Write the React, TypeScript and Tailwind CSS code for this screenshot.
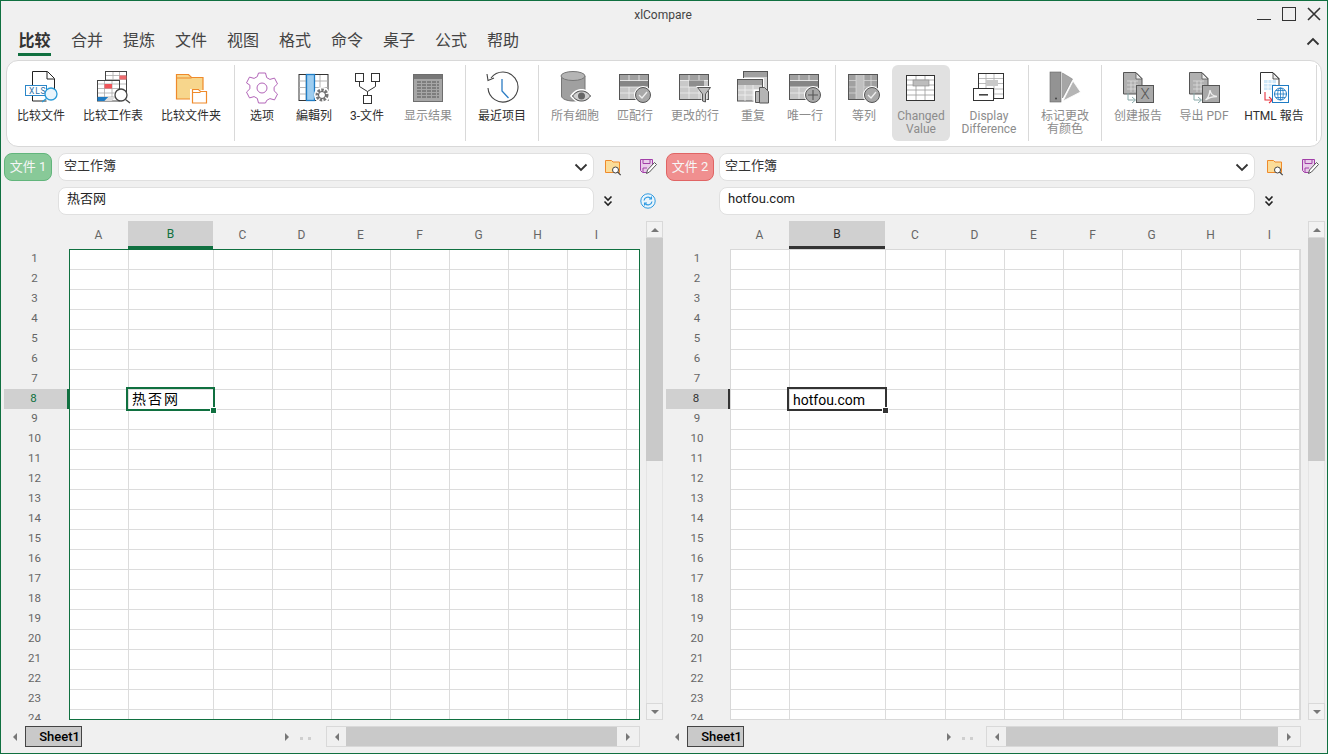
import React from "react";

const FONT = "font-['Roboto','Noto_Sans_CJK_SC',sans-serif]";
const G = "#a0a0a0";
const D = "#555555";

const Svg = ({ children }: { children: React.ReactNode }) => (
  <svg width="36" height="36" viewBox="0 0 36 36" fill="none" className="shrink-0">{children}</svg>
);

const Badge = ({ kind }: { kind: "check" | "plus" }) => (
  <g>
    <circle cx="26" cy="25" r="9" fill="#fff" />
    <circle cx="26" cy="25" r="7.5" fill="#a8a8a8" stroke={D} strokeWidth="1" />
    {kind === "check" ? (
      <path d="M22 25l3 3 5-6" stroke="#eee" strokeWidth="1.3" />
    ) : (
      <path d="M21 25h10M26 20v10" stroke={D} strokeWidth="1.1" />
    )}
  </g>
);

const GrayTable = () => (
  <g>
    <rect x="2.5" y="4.5" width="29" height="25" fill="#c6c6c6" stroke={D} />
    <rect x="3" y="5" width="28" height="5.500" fill={G} />
    <rect x="3" y="11" width="28" height="6" fill="#858585" />
    <path d="M3 10.500h28M3 17h28M3 23h28M12 5v6M22 5v6M12 17v12M22 17v12" stroke="#eee" strokeWidth="0.8" />
  </g>
);

const SourceDoc = ({ arrow }: { arrow: string }) => (
  <g transform="translate(-3 0)">
    <path d="M6.500 2.500H19l6 6V24H6.500z" fill="#b0b0b0" stroke={D} />
    <path d="M19 3v6h6z" fill="#eee" stroke={D} strokeWidth="0.8" />
    <path d="M10 11h11M10 15h11M10 19h11M14 11v11M18 11v11" stroke="#ddd" strokeWidth="0.8" />
    <path d="M11 23v7h7M15 27l3.500 3-3.500 3" stroke={arrow} strokeWidth="1" />
  </g>
);

const icons: Record<string, React.ReactNode> = {
  file: (
    <Svg>
      <path d="M9.500 15V1.500h15l7 7v15M9.500 26v5h14" stroke="#222" strokeWidth="1" />
      <path d="M24 2v7h7" stroke="#222" strokeWidth="1" />
      <rect x="2.500" y="15.500" width="21" height="10" fill="#fff" stroke="#2a86c8" />
      <text x="6" y="24" fontSize="8.500" fontFamily="Roboto" fill="#2a6fa8" letterSpacing="0.8">XLS</text>
      <circle cx="28" cy="24" r="6" fill="#eaf5fc" stroke="#2a9bd8" strokeWidth="1.300" />
      <path d="M23.500 28.500L19 32" stroke="#2a9bd8" strokeWidth="1.300" />
    </Svg>
  ),
  sheet: (
    <Svg>
      <rect x="10.500" y="1.500" width="21" height="21" fill="#fff" stroke="#444" />
      <path d="M11 5.500h20M11 9.500h20M11 14h20M18 2v20M24.500 2v20" stroke="#aaa" strokeWidth="0.8" />
      <rect x="24.500" y="5.500" width="7" height="4" fill="#ee6a6e" />
      <rect x="2.500" y="10.500" width="22" height="20.500" fill="#fff" stroke="#444" />
      <path d="M3 14h21M3 18.500h21M3 23h21M3 27h21M9.500 11v20M17 11v20" stroke="#aaa" strokeWidth="0.8" />
      <rect x="9.500" y="14" width="7.500" height="4.500" fill="#f0555a" />
      <path d="M2.500 31v-4h11l-4 4z" fill="#1f7cc4" />
      <path d="M9.500 31l4-4h7l-4 4z" fill="#ddd" />
      <circle cx="26" cy="25" r="6" fill="#fff" stroke="#444" strokeWidth="1.300" />
      <path d="M30.500 29.500l4.500 3.500" stroke="#444" strokeWidth="1.300" />
    </Svg>
  ),
  folder: (
    <Svg>
      <path d="M3.500 4.500h12l3 3h11.500v21.500H3.500z" fill="#f7d68c" stroke="#ef8a2b" strokeWidth="1.200" />
      <path d="M3.500 8h15" stroke="#ef8a2b" />
      <path d="M18 19h-1v14.500h17.500V20h-7l-2-1z" fill="#fff" />
      <path d="M19.500 19.500h6l2 2h6v11.500H19.500z" fill="#fff" stroke="#ef8a2b" strokeWidth="1.200" />
      <path d="M19.500 22.500h8" stroke="#ef8a2b" />
    </Svg>
  ),
  gear: (
    <Svg>
      <path
        d="M14.500 3h7l1.200 4.600 3.200 1.800 4.600-1.300 3 5.800-3.400 3.300v3.600l3.400 3.300-3 5.800-4.600-1.300-3.200 1.800L21.500 33h-7l-1.200-4.600-3.200-1.800-4.600 1.300-3-5.800 3.400-3.300v-3.600L2.500 12.900l3-5.800 4.600 1.300 3.200-1.800z"
        stroke="#b264b8"
        strokeWidth="1"
        fill="#fff"
      />
      <circle cx="18" cy="18" r="5" stroke="#b264b8" strokeWidth="1" />
    </Svg>
  ),
  editcol: (
    <Svg>
      <rect x="3" y="4.500" width="29" height="26" fill="#fff" stroke="#333" />
      <path d="M3 11h29M3 17.500h29M3 24h29M10 5v25M24 5v20" stroke="#aaa" strokeWidth="0.9" />
      <rect x="10.500" y="4.500" width="8" height="26" fill="#9dcdf0" stroke="#1f7cc4" strokeWidth="1.300" />
      <circle cx="26" cy="25" r="8" fill="#fff" />
      <circle cx="26" cy="25" r="5" fill="none" stroke="#777" strokeWidth="3" strokeDasharray="2.500 1.200" />
      <circle cx="26" cy="25" r="3.500" fill="#fff" stroke="#555" strokeWidth="1" />
    </Svg>
  ),
  three: (
    <Svg>
      <rect x="6.500" y="3.500" width="8" height="8" stroke="#333" />
      <rect x="22.500" y="3.500" width="8" height="8" stroke="#333" />
      <rect x="14.500" y="25.500" width="8" height="8" stroke="#333" />
      <path d="M10.500 11.500v5l8 5 8-5v-5M18.500 21.500v4" stroke="#333" />
    </Svg>
  ),
  result: (
    <Svg>
      <rect x="3.500" y="4.500" width="29" height="27" fill="#a6a6a6" stroke="#6e6e6e" />
      <rect x="4" y="5" width="28" height="4" fill="#777" />
      <path d="M7 12h22M7 15h22M7 18h22M7 21h22M7 24h22M7 27h22" stroke="#555" strokeWidth="1" strokeDasharray="4 1" />
    </Svg>
  ),
  recent: (
    <Svg>
      <path d="M7 8A15 15 0 1 1 4 18" stroke="#444" strokeWidth="1.100" />
      <path d="M3 4l1 6.500L10 8" stroke="#444" strokeWidth="1.100" />
      <path d="M18 9v12l6.500 7" stroke="#2b7cc4" strokeWidth="1.300" />
    </Svg>
  ),
  cells: (
    <Svg>
      <path d="M4.500 6v20c0 3 6 5 11.500 5s12-2 12-5V6z" fill={G} stroke="#777" />
      <ellipse cx="16" cy="6" rx="12" ry="4.500" fill="#b5b5b5" stroke="#777" />
      <path d="M13 26c4-6 8-7 11.500-7S32 20 36 26c-4 5-8 7-11.500 7S17 31 13 26z" fill="#fff" />
      <path d="M15.500 26c3-4 6-5 9-5s6 1 9 5c-3 4-6 5-9 5s-6-1-9-5z" fill="#cfcfcf" stroke="#444" />
      <circle cx="24.500" cy="26" r="3.500" fill="#666" />
    </Svg>
  ),
  match: (
    <Svg>
      <GrayTable />
      <Badge kind="check" />
    </Svg>
  ),
  changedRows: (
    <Svg>
      <rect x="2.500" y="4.500" width="29" height="25" fill="#c9c9c9" stroke={D} />
      <rect x="3" y="5" width="28" height="5" fill={G} />
      <path d="M3 10.500h28M3 17h28M3 23h28M12 5v24M22 5v24" stroke="#eee" strokeWidth="0.8" />
      <rect x="12" y="10.500" width="15" height="6" fill="#8d8d8d" />
      <path d="M19 16h16l-5.500 7.500V34l-5-1.500v-9z" fill="#fff" />
      <path d="M20.500 17.500h13l-5 6.500v8l-3-1v-7z" fill="#bdbdbd" stroke={D} strokeWidth="1" />
    </Svg>
  ),
  dup: (
    <Svg>
      <rect x="8.500" y="1.500" width="24" height="22" fill="#d6d6d6" stroke={D} />
      <rect x="9" y="2" width="23" height="5" fill={G} />
      <rect x="1" y="8" width="28" height="25" fill="#fff" />
      <rect x="2.500" y="9.500" width="25" height="21.500" fill="#d0d0d0" stroke={D} />
      <rect x="3" y="10" width="24" height="5" fill={G} />
      <path d="M3 20h24M3 25h24M10 15v16M18 15v16" stroke="#f2f2f2" strokeWidth="0.8" />
      <path d="M18.500 19.500h8l3 0 5 5V34h-16z" fill="#fff" />
      <path d="M20.500 21.500h6v11h-6z" fill="#b5b5b5" stroke={D} />
      <path d="M24.500 17.500h5l4 4v11.500h-9z" fill="#b5b5b5" stroke={D} />
    </Svg>
  ),
  unique: (
    <Svg>
      <GrayTable />
      <Badge kind="plus" />
    </Svg>
  ),
  equal: (
    <Svg>
      <rect x="2.500" y="4.500" width="29" height="25" fill="#a0a0a0" stroke={D} />
      <rect x="10" y="5" width="8" height="24" fill="#c0c0c0" />
      <path d="M3 10.500h7M3 17h7M3 23h7M18 10.500h13M18 17h13M18 23h13M10 5v24M18 5v24M25 5v24" stroke="#ddd" strokeWidth="0.7" />
      <Badge kind="check" />
    </Svg>
  ),
  changed: (
    <Svg>
      <rect x="3.500" y="5.500" width="28" height="25" fill="#fff" stroke="#333" />
      <path d="M4 10h27M4 15h27M4 20h27M4 25h27M13 6v24M22 6v24" stroke="#999" strokeWidth="0.8" />
      <rect x="10" y="10" width="16" height="6" fill="#bdbdbd" stroke="#888" strokeWidth="0.6" />
    </Svg>
  ),
  display: (
    <Svg>
      <rect x="7.500" y="3.500" width="25" height="25" fill="#fff" stroke="#333" />
      <path d="M8 8.500h24M8 13.500h24M8 19h24M8 24h24M15 4v24M23 4v24" stroke="#aaa" strokeWidth="0.8" />
      <rect x="15" y="10" width="12" height="6" fill="#c9c9c9" />
      <rect x="2.500" y="18.500" width="20" height="12" fill="#fff" stroke="#333" />
      <rect x="8" y="24" width="9" height="1.600" fill="#444" />
    </Svg>
  ),
  colors: (
    <Svg>
      <rect x="3" y="2" width="11" height="30" fill="#939393" stroke="#666" strokeWidth="0.6" />
      <circle cx="9" cy="28.500" r="1" fill="#444" />
      <path d="M15.500 28V3l10 6z" fill="#a6a6a6" stroke="#777" strokeWidth="0.5" />
      <path d="M16 31l10-20 7.500 11z" fill="#b5b5b5" stroke="#fff" strokeWidth="0.8" />
    </Svg>
  ),
  report: (
    <Svg>
      <SourceDoc arrow="#8aa" />
      <rect x="16.500" y="15.500" width="17" height="17" fill="#a9a9a9" stroke={D} />
      <text x="25" y="29" fontSize="15" fontFamily="Roboto" fontWeight="300" fill="#555" textAnchor="middle">X</text>
    </Svg>
  ),
  pdf: (
    <Svg>
      <SourceDoc arrow="#8aa" />
      <rect x="16.500" y="15.500" width="17" height="17" fill="#a9a9a9" stroke={D} />
      <path d="M19.500 30c3-2 4-6 4.500-10 .5 4 2.500 6 7 6.500-4 0-8 1-11.500 3.500z" stroke="#eee" strokeWidth="1.300" />
    </Svg>
  ),
  html: (
    <Svg>
      <g transform="translate(-2 0)">
        <path d="M6.500 24V2.500H19l6 6V17" stroke="#333" fill="none" />
        <path d="M19 3v6h6z" fill="#eee" stroke="#333" strokeWidth="0.8" />
        <rect x="10" y="10" width="12" height="10" fill="#cde6f7" />
        <path d="M10 13.500h12M10 17h12M14 10v10M18 10v10" stroke="#fff" strokeWidth="0.8" />
        <path d="M11 22v8h7M15 27l3.500 3-3.500 3" stroke="#e8323c" strokeWidth="1.100" />
        <rect x="18.500" y="15.500" width="16" height="17" fill="#fff" stroke="#1f7cc4" />
        <circle cx="26.500" cy="24" r="6" stroke="#1f7cc4" />
        <path d="M20.500 24h12M26.500 18v12M22 20.500h9M22 27.500h9" stroke="#1f7cc4" strokeWidth="0.8" />
        <ellipse cx="26.500" cy="24" rx="2.800" ry="6" stroke="#1f7cc4" strokeWidth="0.8" />
      </g>
    </Svg>
  ),
};

type Item = { k: string; label: string[]; w: string; off?: boolean; active?: boolean };

const Tool = ({ k, label, w, off, active }: Item) => (
  <div className={`${w} mt-[4px] h-[76px] pt-[5px] flex flex-col items-center shrink-0 rounded-md ${active ? "bg-[#e1e1e1]" : ""}`}>
    {icons[k]}
    <div className={`mt-[4px] text-[12px] leading-[13px] text-center whitespace-nowrap ${off ? "text-[#8c8c8c]" : "text-[#2e2e2e]"}`}>
      {label.map((l) => (
        <div key={l}>{l}</div>
      ))}
    </div>
  </div>
);

const Sep = ({ m = "" }: { m?: string }) => <div className={`w-px h-[76px] mt-[4px] bg-[#d9d9d9] shrink-0 ${m}`} />;

const FolderSearch = () => (
  <svg width="18" height="18" viewBox="0 0 18 18" fill="none">
    <path d="M1.500 2.500h6l1.500 1.500h6.500v10.500H1.500z" fill="#fbdc98" stroke="#ef8a2b" />
    <circle cx="11.500" cy="12" r="3" fill="#fff" stroke="#444" />
    <path d="M13.700 14.200l3 3" stroke="#444" strokeWidth="1.200" />
  </svg>
);

const SaveEdit = () => (
  <svg width="18" height="18" viewBox="0 0 18 18" fill="none">
    <path d="M1.500 1.500h12v6l-5 7h-5l-2-2z" fill="#e9cdea" stroke="#a23fa8" />
    <path d="M4 1.500v4h7v-4M4 14v-4h4" stroke="#a23fa8" />
    <path d="M7.500 15.500l1-3.500 7-7.500 2 2-7 7.500z" fill="#fff" stroke="#555" />
  </svg>
);

const DoubleChevron = () => (
  <svg width="12" height="12" viewBox="0 0 12 12" fill="none" stroke="#222" strokeWidth="1.600">
    <path d="M2.500 1.500L6 5l3.500-3.500M2.500 6.500L6 10l3.500-3.500" />
  </svg>
);

const Chevron = () => (
  <svg width="14" height="9" viewBox="0 0 14 9" fill="none" stroke="#333" strokeWidth="1.800">
    <path d="M1.500 1.500L7 7l5.500-5.500" />
  </svg>
);

const Refresh = () => (
  <svg width="16" height="16" viewBox="0 0 16 16" fill="none" stroke="#2f9ae0" strokeWidth="1">
    <circle cx="8" cy="8" r="7.200" fill="#eaf5fc" />
    <path d="M4 7.500a4 4 0 0 1 7-2M12 8.500a4 4 0 0 1-7 2" strokeWidth="1.200" />
    <path d="M11.500 3.500v2.500H9M4.500 12.500V10H7" strokeWidth="1.100" />
  </svg>
);

const ROWS = Array.from({ length: 24 }, (_, i) => i + 1);
const COLS = ["A", "B", "C", "D", "E", "F", "G", "H", "I"];

type Tri = "l" | "r" | "u" | "d";
const Arrow = ({ d }: { d: Tri }) => {
  const p = { l: "M7 1v8L3 5z", r: "M3 1v8l4-4z", u: "M1 7h8L5 3z", d: "M1 3h8L5 7z" }[d];
  return (
    <svg width="10" height="10" viewBox="0 0 10 10">
      <path d={p} fill="#777" />
    </svg>
  );
};

type PaneProps = {
  side: "left" | "right";
  badge: string;
  value: string;
};

const Pane = ({ side, badge, value }: PaneProps) => {
  const left = side === "left";
  const cols = left
    ? "grid-cols-[59px_85px_59px_59px_59px_59px_59px_59px_59px_12px]"
    : "grid-cols-[59px_96px_60px_59px_59px_59px_59px_59px_59px]";
  const cells = left ? [...COLS, ""] : COLS;
  return (
    <div className={`flex flex-col shrink-0 ${left ? "w-[661px] pl-[3px]" : "w-[664px] pl-[4px]"}`}>
      <div className="flex h-[28px] items-center">
        <div
          className={`w-[48px] h-[28px] rounded-lg border text-[13px] text-[#f6f6f6] flex items-center justify-center shrink-0 ${
            left ? "bg-[#88c998] border-[#62b57c]" : "bg-[#f08f8f] border-[#e06464]"
          }`}
        >
          {badge}
        </div>
        <div className={`h-[28px] w-[536px] rounded-lg border border-[#e0e0e0] bg-white flex items-center justify-between pl-[5px] pr-[5px] text-[13px] text-[#333] shrink-0 ${left ? "ml-[6px]" : "ml-[5px]"}`}>
          <span className="pb-[2px]">空工作簿</span>
          <Chevron />
        </div>
        <div className={`h-full flex items-center justify-center shrink-0 ${left ? "w-[38px]" : "w-[40px]"}`}>
          <FolderSearch />
        </div>
        <div className={`h-full flex items-center justify-center shrink-0 ${left ? "w-[32px]" : "w-[30px]"}`}>
          <SaveEdit />
        </div>
      </div>

      <div className={`flex h-[28px] mt-[6px] items-center ${left ? "pl-[54px]" : "pl-[53px]"}`}>
        <div className="h-[28px] w-[536px] rounded-lg border border-[#e0e0e0] bg-white flex items-center text-[13px] text-[#222] shrink-0 pb-[5px] pl-[8px]">
          {value}
        </div>
        <div className="w-[28px] h-full flex items-center justify-center shrink-0">
          <DoubleChevron />
        </div>
        {left && (
          <div className="w-[52px] h-full flex items-center justify-center shrink-0">
            <Refresh />
          </div>
        )}
      </div>

      <div className="flex mt-[6px] h-[499px]">
        <div className="w-[642px] shrink-0 flex flex-col overflow-hidden">
          <div className={`flex h-[28px] shrink-0 ${left ? "pl-[65px]" : "pl-[64px]"}`}>
            <div className={`grid ${cols} h-[28px]`}>
              {cells.map((c) => (
                <div
                  key={c || "x"}
                  className={`flex items-center justify-center text-[12px] ${
                    c === "B"
                      ? `bg-[#d0d0d0] border-b-[3px] ${left ? "border-[#107040] text-[#107040]" : "border-[#333] text-[#333]"}`
                      : "text-[#666]"
                  }`}
                >
                  {c}
                </div>
              ))}
            </div>
          </div>
          <div className="flex h-[471px]">
            <div className={`shrink-0 flex flex-col h-[471px] overflow-hidden ${left ? "w-[65px]" : "w-[64px]"}`}>
              {ROWS.map((r) => (
                <div
                  key={r}
                  className={`h-[20px] shrink-0 flex items-center justify-center text-[11.500px] ${left ? "pl-[19px] pr-[23px]" : "pl-[20px] pr-[22px]"} ${
                    r === 8
                      ? `bg-[#d0d0d0] border-r-[2px] ${left ? "border-[#107040] text-[#107040]" : "border-[#333] text-[#333]"}`
                      : "text-[#666]"
                  }`}
                >
                  {r}
                </div>
              ))}
            </div>
            <div className={`relative w-[571px] h-[471px] bg-white border shrink-0 overflow-hidden ${left ? "border-[#107040]" : "border-[#d8d8d8]"}`}>
              <div className={`grid ${cols}`}>
                {ROWS.map((r) =>
                  cells.map((c) => (
                    <div
                      key={`${r}${c}`}
                      className={`h-[20px] border-b border-[#dcdcdc] ${c ? "border-r" : ""}`}
                    />
                  ))
                )}
              </div>
              <div
                className={`absolute left-[56px] top-[137px] h-[24px] border-2 flex items-center text-[14px] text-black leading-none ${
                  left ? "w-[89px] border-[#107040] pl-[4px] tracking-[2px] pb-[1px]" : "w-[100px] border-[#333] pl-[4px] pt-[2px]"
                }`}
              >
                {value}
              </div>
              <div
                className={`absolute top-[157px] w-[7px] h-[7px] border border-white ${
                  left ? "left-[140px] bg-[#107040]" : "left-[151px] bg-[#333]"
                }`}
              />
            </div>
          </div>
        </div>
        <div className="w-[17px] shrink-0 flex flex-col bg-[#f0f0f0] border-x border-[#e4e4e4]">
          <div className="h-[17px] border border-[#d9d9d9] -mx-px bg-[#f2f2f2] flex items-center justify-center shrink-0">
            <Arrow d="u" />
          </div>
          <div className="h-[223px] bg-[#c9c9c9] -mx-px shrink-0" />
          <div className="flex-1" />
          <div className="h-[17px] border border-[#d9d9d9] -mx-px bg-[#f2f2f2] flex items-center justify-center shrink-0">
            <Arrow d="d" />
          </div>
        </div>
      </div>

      <div className="flex items-center mt-[6px] h-[21px]">
        <div className="w-[21px] flex justify-center shrink-0">
          <Arrow d="l" />
        </div>
        <div className="w-[57px] h-[21px] bg-[#c9c9c9] border border-[#444] flex items-center justify-end pr-[1px] text-[13px] font-medium text-black shrink-0">
          Sheet1
        </div>
        <div className="w-[210px] flex justify-end shrink-0">
          <Arrow d="r" />
        </div>
        <div className={`flex pl-[8px] gap-[5px] shrink-0 pt-[3px] ${left ? "w-[34px]" : "w-[32px]"}`}>
          <div className="w-[3px] h-[3px] bg-[#cfcfcf]" />
          <div className="w-[3px] h-[3px] bg-[#cfcfcf]" />
        </div>
        <div className={`h-[21px] flex border border-[#d9d9d9] shrink-0 ${left ? "w-[314px]" : "w-[315px]"}`}>
          <div className="w-[19px] flex items-center justify-center shrink-0">
            <Arrow d="l" />
          </div>
          <div className="flex-1 bg-[#c9c9c9]" />
          <div className="w-[22px] flex items-center justify-center shrink-0">
            <Arrow d="r" />
          </div>
        </div>
      </div>
    </div>
  );
};

const MENU = ["合并", "提炼", "文件", "视图", "格式", "命令", "桌子", "公式", "帮助"];

export default function App() {
  return (
    <div className={`${FONT} w-[1328px] h-[754px] overflow-hidden bg-[#f0f0f0] border border-[#107040] flex flex-col`}>
      <div className="h-[26px] shrink-0 flex items-center relative">
        <div className="flex-1 text-center text-[12px] text-[#444] pt-[1px] pr-[2px]">xlCompare</div>
        <div className="absolute right-[6px] top-[6px] flex items-start gap-[11px]">
          <div className="w-[14px] h-[13px] border-b border-[#333]" />
          <div className="w-[14px] h-[14px] border border-[#333]" />
          <svg width="14" height="14" viewBox="0 0 14 14" stroke="#333" strokeWidth="1.600">
            <path d="M1 1l12 12M13 1L1 13" />
          </svg>
        </div>
      </div>

      <div className="h-[33px] shrink-0 flex items-start pl-[17px] gap-[20px] relative">
        <div className="h-[29px] w-[33px] flex items-center justify-center border-b-[3px] border-[#107040] text-[16px] font-bold text-[#333] whitespace-nowrap pt-[2px]">比较</div>
        {MENU.map((m) => (
          <div key={m} className="h-[29px] w-[32px] flex items-center text-[16px] text-[#444] whitespace-nowrap pb-[1px]">
            {m}
          </div>
        ))}
        <div className="absolute right-[7px] top-[10px] rotate-180">
          <Chevron />
        </div>
      </div>

      <div className="ml-[5px] w-[1316px] h-[87px] shrink-0 bg-white border border-[#d8d8d8] rounded-xl flex pl-[5px]">
        <Tool k="file" label={["比较文件"]} w="w-[58px]" />
        <Tool k="sheet" label={["比较工作表"]} w="w-[86px]" />
        <Tool k="folder" label={["比较文件夹"]} w="w-[70px]" />
        <Sep m="ml-[8px]" />
        <Tool k="gear" label={["选项"]} w="w-[54px]" />
        <Tool k="editcol" label={["編輯列"]} w="w-[50px]" />
        <Tool k="three" label={["3-文件"]} w="w-[56px]" />
        <Tool k="result" label={["显示结果"]} w="w-[66px]" off />
        <Sep m="ml-[4px]" />
        <Tool k="recent" label={["最近项目"]} w="w-[72px]" />
        <Sep />
        <Tool k="cells" label={["所有细胞"]} w="w-[72px]" off />
        <Tool k="match" label={["匹配行"]} w="w-[48px]" off />
        <Tool k="changedRows" label={["更改的行"]} w="w-[72px]" off />
        <Tool k="dup" label={["重复"]} w="w-[44px]" off />
        <Tool k="unique" label={["唯一行"]} w="w-[60px]" off />
        <Sep />
        <Tool k="equal" label={["等列"]} w="w-[56px]" off />
        <Tool k="changed" label={["Changed", "Value"]} w="w-[58px]" off active />
        <Tool k="display" label={["Display", "Difference"]} w="w-[78px]" off />
        <Sep />
        <Tool k="colors" label={["标记更改", "有颜色"]} w="w-[72px]" off />
        <Sep />
        <Tool k="report" label={["创建报告"]} w="w-[72px]" off />
        <Tool k="pdf" label={["导出 PDF"]} w="w-[60px]" off />
        <Tool k="html" label={["HTML 報告"]} w="w-[80px]" />
        <Sep m="ml-[2px]" />
      </div>

      <div className="flex mt-[6px]">
        <Pane side="left" badge="文件 1" value="热否网" />
        <Pane side="right" badge="文件 2" value="hotfou.com" />
      </div>
    </div>
  );
}
